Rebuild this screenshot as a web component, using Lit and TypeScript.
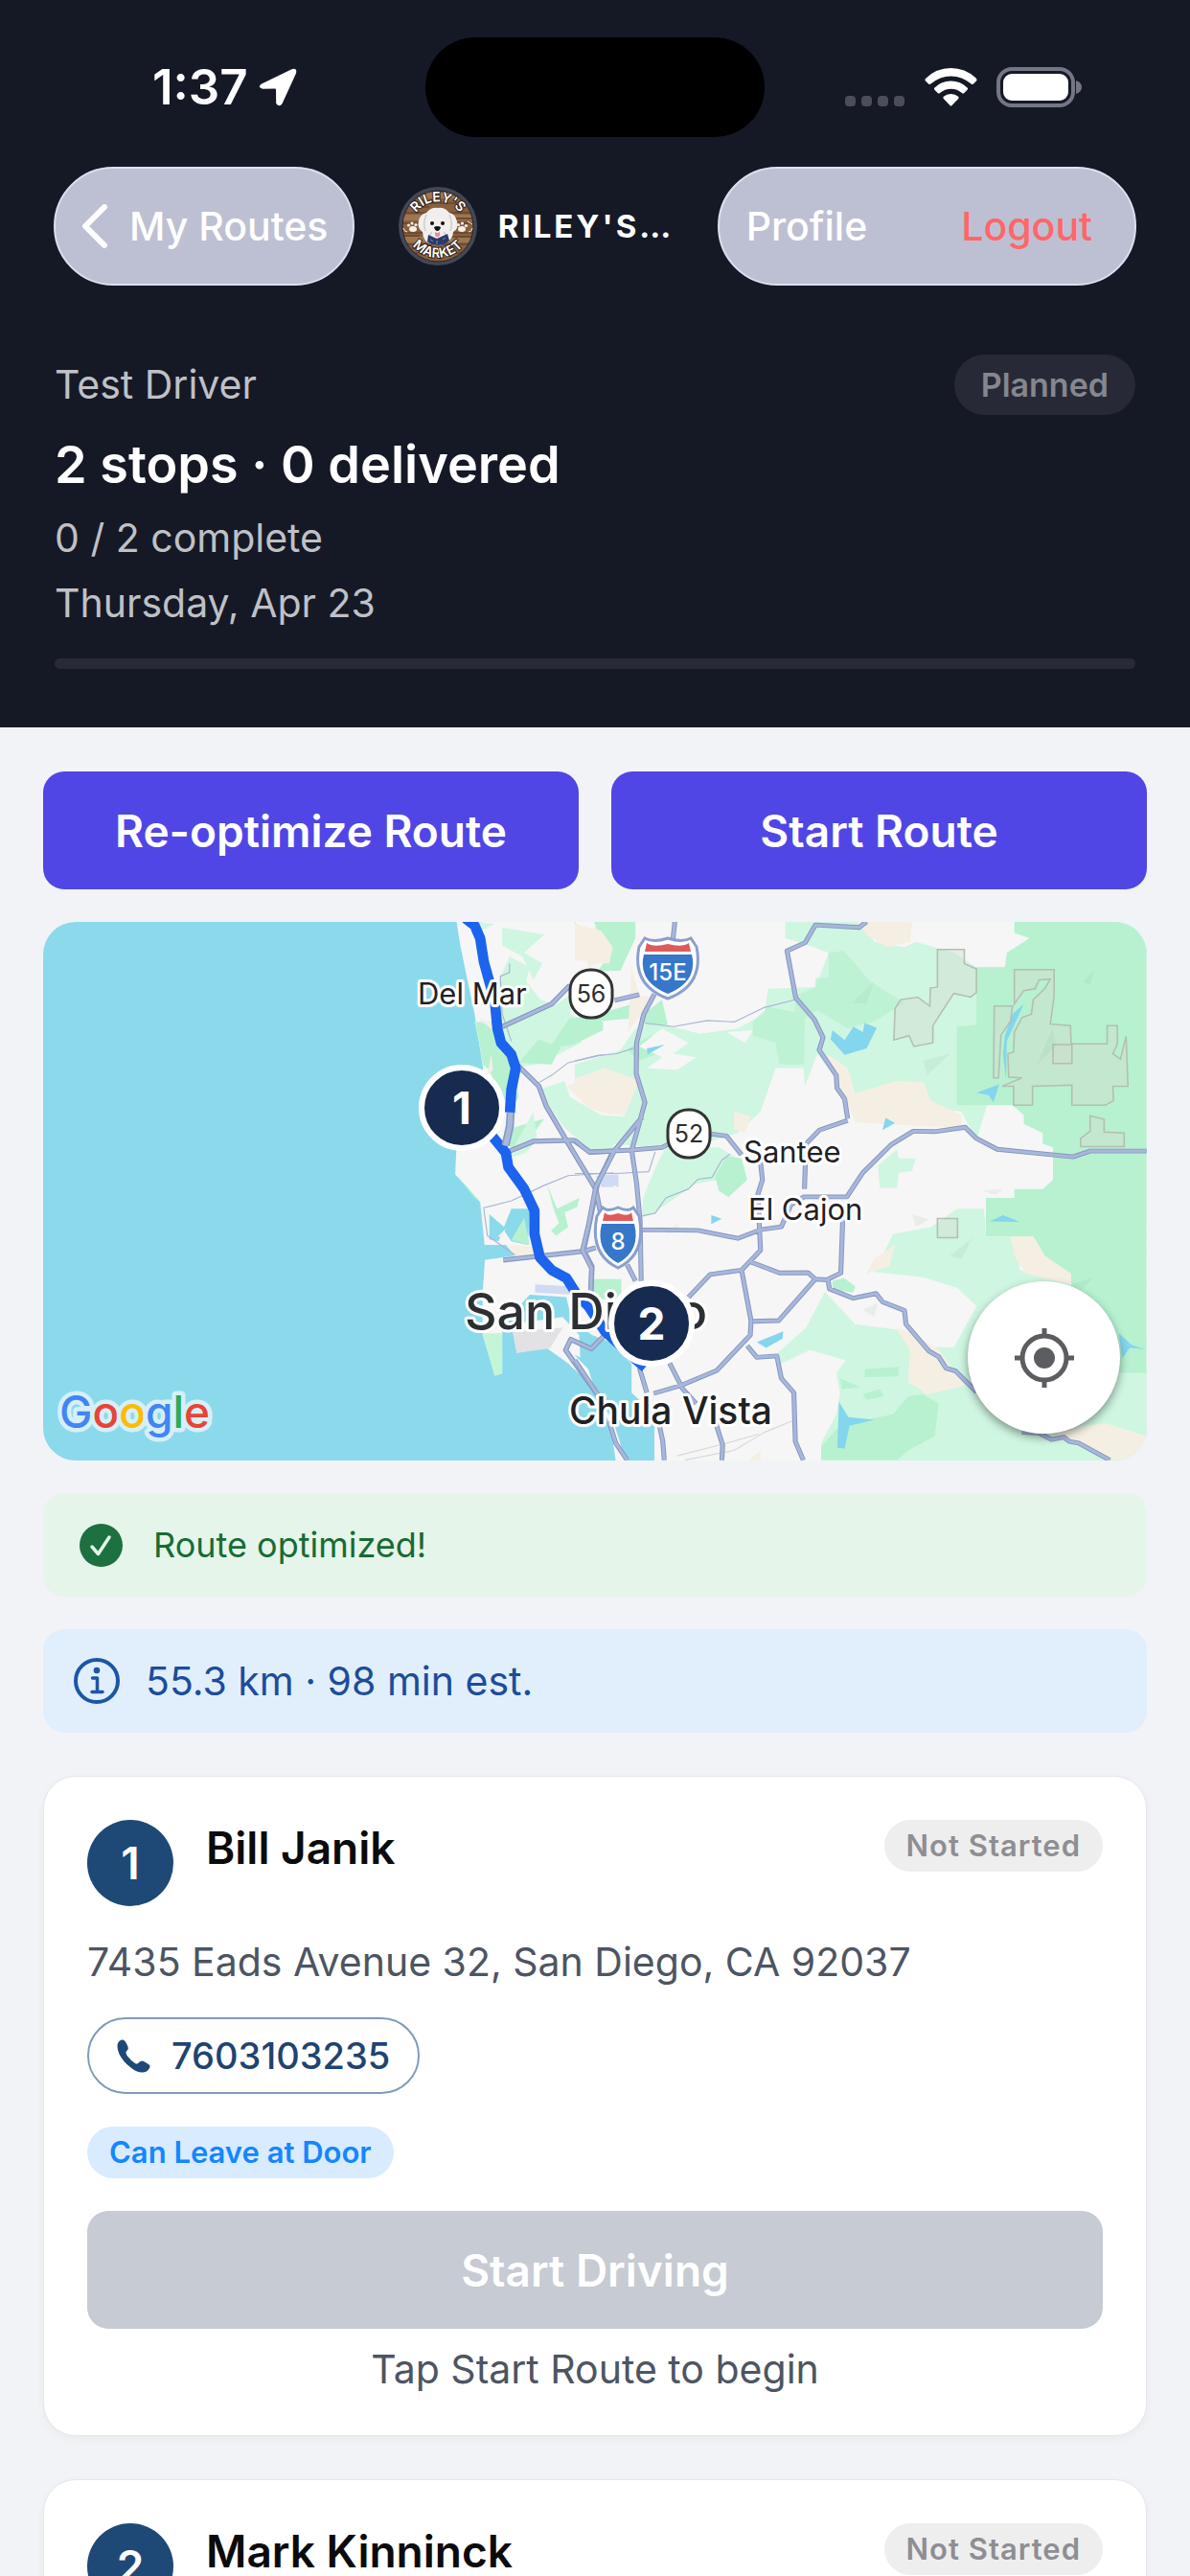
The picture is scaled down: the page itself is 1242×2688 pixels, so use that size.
import { LitElement, html, css, svg, nothing } from "lit";
import { customElement, property } from "lit/decorators.js";

interface Stop {
  order: number;
  name: string;
  status: string;
  address?: string;
  phone?: string;
  tag?: string;
}

interface Pin {
  order: number;
  x: number;
  y: number;
}

const STOPS: Stop[] = [
  {
    order: 1,
    name: "Bill Janik",
    status: "Not Started",
    address: "7435 Eads Avenue 32, San Diego, CA 92037",
    phone: "7603103235",
    tag: "Can Leave at Door",
  },
  { order: 2, name: "Mark Kinninck", status: "Not Started" },
];

/* Pin centres in map units (the map canvas is 1152 x 562). */
const PINS: Pin[] = [
  { order: 1, x: 437, y: 194 },
  { order: 2, x: 635, y: 419 },
];

const SANS = css`Inter, "Liberation Sans", sans-serif`;

/* ---------- Status bar ---------- */
@customElement("status-bar")
class StatusBar extends LitElement {
  static styles = css`
    :host {
      display: grid;
      grid-template-columns: 1fr auto 1fr;
      padding-top: 39px;
      height: 104px;
      font-family: ${SANS};
      color: #fff;
    }
    .left {
      display: flex;
      align-items: center;
      gap: 11px;
      padding-left: 159px;
    }
    .time {
      font-size: 51px;
      font-weight: 600;
      line-height: 60px;
    }
    .island {
      width: 354px;
      height: 104px;
      border-radius: 52px;
      background: #000;
    }
    .right {
      display: flex;
      align-items: center;
      justify-content: flex-end;
      padding-right: 112px;
    }
    .dots {
      margin-right: 21px;
    }
    .wifi {
      margin-right: 20px;
    }
    svg {
      display: block;
    }
  `;

  render() {
    return html`
      <div class="left">
        <span class="time">1:37</span>
        <svg width="40" height="40" viewBox="0 0 40 40" aria-hidden="true">
          <path
            d="M3 16.5 34.5 1.2 Q40.4 -0.400 39 5.6 L24.6 37 Q21.6 41.600 18.2 37 L18 22.6 Q18 21.6 17 21.6 L4 21.8 Q-2 20 3 16.5Z"
            fill="#fff"
          />
        </svg>
      </div>
      <div class="island"></div>
      <div class="right">
        <svg class="dots" width="62" height="40" viewBox="0 0 62 40" aria-hidden="true">
          ${[0, 17, 34, 51].map(
            (x) => svg`<rect x=${x} y="29" width="11" height="11" rx="4" fill="#4b4d5a" />`,
          )}
        </svg>
        <svg class="wifi" width="55" height="40" viewBox="0 0 55 40" aria-hidden="true">
          <g fill="#fff">
            <path d="M27.500 0 Q43 0 54 11 Q55 12.500 54 13.600 L51 16.600 Q50 17.600 48.600 16.600 Q39 8.500 27.500 8.500 Q16 8.500 6.400 16.600 Q5 17.600 4 16.600 L1 13.600 Q0 12.500 1 11 Q12 0 27.500 0Z" />
            <path d="M27.500 13.500 Q37.500 13.500 44.600 20.500 Q45.600 21.600 44.600 22.800 L41.300 26 Q40.200 27 39 26 Q34 21.700 27.500 21.700 Q21 21.700 16 26 Q14.800 27 13.700 26 L10.400 22.800 Q9.400 21.600 10.400 20.500 Q17.500 13.500 27.500 13.500Z" />
            <path d="M27.500 27 Q32 27 35.200 29.800 Q36.200 30.800 35.200 32 L28.500 39 Q27.500 40 26.500 39 L19.800 32 Q18.800 30.800 19.800 29.800 Q23 27 27.500 27Z" />
          </g>
        </svg>
        <svg width="90" height="42" viewBox="0 0 90 42" aria-hidden="true">
          <rect x="2" y="2" width="78" height="38" rx="14" fill="none" stroke="#757683" stroke-width="4" />
          <rect x="7" y="7" width="68" height="28" rx="9" fill="#fff" />
          <path d="M83 14 Q89 16 89 21 Q89 26 83 28Z" fill="#757683" />
        </svg>
      </div>
    `;
  }
}

/* ---------- Round shop logo ---------- */
@customElement("shop-logo")
class ShopLogo extends LitElement {
  static styles = css`
    :host {
      display: block;
      width: 82px;
      height: 82px;
      flex: none;
    }
    svg {
      display: block;
    }
    .arc {
      font: 600 14px ${SANS};
      fill: #fff;
      stroke: #2e1f18;
      stroke-width: 2px;
      paint-order: stroke;
    }
  `;

  render() {
    return html`
      <svg width="82" height="82" viewBox="0 0 82 82" role="img" aria-label="Riley's Market">
        <defs>
          <clipPath id="disc"><circle cx="41" cy="41" r="37" /></clipPath>
          <path id="top" d="M15 33 A28 28 0 0 1 67 33" />
          <path id="bottom" d="M8 48 A34 34 0 0 0 74 48" />
        </defs>
        <circle cx="41" cy="41" r="41" fill="#434856" />
        <g clip-path="url(#disc)">
          <rect width="82" height="82" fill="#87603f" />
          <path d="M0 9h82M0 32h82M0 55h82" stroke="#9c7552" stroke-width="6" />
          <path d="M0 17h82M0 27h82M0 38h82M0 48h82M0 60h82M0 69h82" stroke="#563824" stroke-width="1" />
          <path d="M12 21h20M50 33h28M4 51h18M55 52h22M14 64h16" stroke="#70492f" stroke-width="2" />
        </g>
        <circle cx="41" cy="41" r="37" fill="none" stroke="#31231f" stroke-width="1" />
        <path
          d="M41 22 Q48 21 53 27 Q59 28 61 36 Q63 44 57 47 Q57 52 53 56 Q48 61 41 61 Q33 61 28 56 Q25 52 25 47 Q19 43 21 35 Q23 28 29 27 Q34 21 41 22Z"
          fill="#f0efed"
        />
        <path d="M29 29 Q25 38 28 46 M53 29 Q57 38 54 46 M35 47 Q31 51 34 56 M47 47 Q51 51 48 56" fill="none" stroke="#d0ccca" stroke-width="1.500" />
        <path d="M31 50 L40 54 L51 49 L53 56 Q49 61 41 61 Q34 61 30 57Z" fill="#293a69" />
        <path d="M33 55l3 2M46 55l3-2M40 56v4" stroke="#7c89b5" stroke-width="1" />
        <circle cx="35" cy="38" r="2" fill="#111" />
        <circle cx="46" cy="38" r="2" fill="#111" />
        <path d="M37 42 Q40.500 40 44 42 Q43 46 40.500 46 Q38 46 37 42Z" fill="#111" />
        <path d="M38 47 Q40.500 49 43 47 Q44 52 40.500 52.500 Q37.500 52 38 47Z" fill="#ee8791" />
        <g fill="#f5efe8">
          <ellipse cx="15" cy="44" rx="4" ry="3" />
          <circle cx="10.500" cy="40" r="1.600" /><circle cx="14" cy="38" r="1.600" /><circle cx="18" cy="39.500" r="1.600" />
          <ellipse cx="66" cy="44" rx="4" ry="3" />
          <circle cx="62.500" cy="39.500" r="1.600" /><circle cx="66.500" cy="38" r="1.600" /><circle cx="70.500" cy="40.500" r="1.600" />
        </g>
        <path d="M5 43 Q6 47 9 47M77 43 Q76 47 73 47M72 36l5 3" fill="none" stroke="#f5efe8" stroke-width="1" />
        <text class="arc" text-anchor="middle"><textPath href="#top" startOffset="50%">RILEY'S</textPath></text>
        <text class="arc" text-anchor="middle"><textPath href="#bottom" startOffset="50%">MARKET</textPath></text>
      </svg>
    `;
  }
}

/* ---------- Route map ---------- */
@customElement("route-map")
class RouteMap extends LitElement {
  static styles = css`
    :host {
      display: block;
      position: relative;
      flex: none;
      border-radius: 34px;
      overflow: hidden;
      font-family: ${SANS};
    }
    .canvas {
      display: block;
      width: 100%;
      aspect-ratio: 1152 / 562;
    }
    .road {
      fill: none;
      stroke-linejoin: round;
    }
    .city {
      fill: #1f2124;
      stroke: #fff;
      stroke-width: 6px;
      stroke-linejoin: round;
      paint-order: stroke;
      font-size: 31px;
    }
    .mid {
      font-size: 39px;
      font-weight: 500;
    }
    .big {
      font-size: 52px;
      font-weight: 500;
      fill: #2d3033;
    }
    .shield {
      font-size: 25px;
      text-anchor: middle;
      fill: #2d2d2d;
    }
    .interstate {
      fill: #fff;
      font-weight: 500;
      font-size: 24px;
    }
    .google {
      font: 500 46px ${SANS};
      stroke: #d6eff8;
      stroke-width: 9px;
      stroke-linejoin: round;
      paint-order: stroke;
    }
    .pin {
      position: absolute;
      box-sizing: border-box;
      width: 90px;
      height: 90px;
      margin: -45px 0 0 -45px;
      display: flex;
      align-items: center;
      justify-content: center;
      border: 6px solid #fff;
      border-radius: 50%;
      background: #172b50;
      color: #fff;
      font-size: 46px;
      font-weight: 700;
      line-height: 50px;
    }
    .locate {
      position: absolute;
      right: 28px;
      bottom: 28px;
      width: 159px;
      height: 159px;
      padding: 0;
      display: flex;
      align-items: center;
      justify-content: center;
      border: 0;
      border-radius: 50%;
      background: #fff;
      box-shadow: 0 4px 10px rgba(0, 0, 0, 0.4);
    }
  `;

  private interstate(x: number, y: number, w: number, label: string) {
    const k = w / 2;
    return svg`<g transform="translate(${x} ${y})">
      <path d="M${-k + 6} -31 Q${-k / 2} -26 0 -31 Q${k / 2} -26 ${k - 6} -31 L${k} -22 Q${k + 8} 18 0 32 Q${-k - 8} 18 ${-k} -22Z" fill="#fff" stroke="#8a9fd0" stroke-width="3" />
      <path d="M${-k + 5} -14 H${k - 5} Q${k + 2} 14 0 27 Q${-k - 2} 14 ${-k + 5} -14Z" fill="#3677ca" />
      <path d="M${-k + 8} -26 Q${-k / 2} -21 0 -25 Q${k / 2} -21 ${k - 8} -26 L${k - 6} -17 H${-k + 6}Z" fill="#de5b5b" />
      <text class="shield interstate" y="13">${label}</text>
    </g>`;
  }

  private stateRoute(x: number, y: number, label: string) {
    return svg`<g transform="translate(${x} ${y})">
      <rect x="-22" y="-25" width="44" height="50" rx="21" fill="#fff" stroke="#333" stroke-width="3" />
      <text class="shield" y="9">${label}</text>
    </g>`;
  }

  render() {
    const highwaysWest =
      "M1265 325 L1400 262 1450 210 M1300 425 L1365 490 1385 545 1440 640 1520 775 1535 850 M1288 560 L1288 600 1274 640 1272 690 M1285 670 L1350 643 1460 640 1505 673 1568 670 M1568 670 L1525 760 1505 860 1487 945 1510 990 1507 1060 M1268 972 L1487 948 1520 938 M1545 1180 L1508 1218 1452 1192 1438 1222 1475 1275 1525 1345";
    const highwaysEast =
      "M264 34 L258 90 M105 252 L170 236 M210 235 L182 290 163 370 162 455 185 535 168 600 150 668 163 760 172 860 175 1030 M178 575 L105 668 55 770 35 880 20 945 44 995 42 1065 M0 640 L38 673 150 667 230 660 258 645 M358 622 L400 628 440 680 M490 700 L495 750 483 790 490 945 440 1000 465 1140 463 1180 375 1278 280 1320 208 1342 M770 34 L750 50 635 43 608 92 560 115 583 245 632 305 655 355 645 390 690 460 692 495 712 525 720 580 M720 585 L645 612 610 650 606 775 M178 888 L325 890 430 912 490 888 545 880 570 820 605 797 718 797 760 730 835 652 893 615 950 616 1030 604 1060 635 1115 665 1315 686 1360 670 1509 670 M707 860 L702 1008 665 1027 635 1025 615 1007 540 1008 465 978 M300 1075 L357 1012 440 1000 M632 1028 L538 1140 470 1142 M668 1027 L672 1052 735 1078 795 1065 812 1088 870 1112 874 1150 935 1225 960 1240 980 1272 1005 1280 1060 1338 M1180 1450 L1225 1452 1258 1470 1290 1463 1305 1475 1330 1480 1412 1527 M455 1210 L480 1242 533 1238 545 1300 578 1340 582 1475 603 1527 M250 1258 L285 1330 320 1370 M372 1425 L390 1485 388 1527 M170 1270 L190 1340 M222 1425 L232 1475 236 1527 M0 1250 L60 1345 M90 1420 L108 1480 138 1527 M138 985 L160 1030";
    return html`
      <svg class="canvas" viewBox="0 0 1152 562" role="img" aria-label="Route map of San Diego">
        <rect width="1152" height="562" fill="#8bdaec" />
        <!-- Western half: coastline, parks and bays -->
        <g transform="matrix(.3827 0 0 .3763 -5 -13)">
          <path d="M1140 30 L1150 95 1165 170 1190 290 1213 440 1190 580 1140 665 1137 735 1205 812 1217 930 1275 930 1300 960 1218 972 1212 1060 1212 1180 1245 1293 1265 1287 1265 1165 1320 1090 1340 1068 1440 1075 1455 1140 1510 1180 1560 1200 1618 1260 1618 1340 1680 1400 1680 1530 3030 1530 3030 30Z" fill="#f6f6f6" />
          <path d="M1290 1150 L1430 1130 1475 1180 1478 1242 1462 1235 1500 1275 1520 1340 1568 1420 1590 1490 1605 1530 1575 1530 1560 1430 1500 1310 1440 1255 1385 1215 1305 1230Z" fill="#f6f6f6" />
          <path d="M1295 1170 L1430 1160 1395 1217 1305 1230Z" fill="#e2e2e4" />
          <path d="M1212 1175 H1265 V1287 L1245 1293Z" fill="#c4f5d6" />
          <path d="M1190 34 L1245 40 1205 60 1190 55Z M1265 50 L1380 70 1325 120 1375 150 1350 195 1320 130 1265 100Z M1255 200 L1285 130 1340 160 1330 200 1370 250 1410 265 1460 230 1450 290 1490 310 1480 370 1430 395 1360 430 1240 445 1215 435 1190 310 1240 310Z" fill="#cff6e1" />
          <path d="M1193 312 L1240 320 1260 395 1300 430 1310 520 1290 560 1225 440 1213 430Z M1310 425 L1365 360 1400 375 1450 300 1540 310 1540 335 1460 375 1425 380 1400 430Z M1458 34 L1568 100 V150 L1500 90Z M1280 610 L1380 580 1330 650 1290 680Z" fill="#b7f1d0" />
          <path d="M1365 500 L1435 475 1450 520 1568 590 1568 665 1500 665 1430 600Z M1350 560 L1280 690 1330 675 1360 640Z" fill="#cff6e1" />
          <path d="M1478 90 L1520 45 1568 34 V130 L1500 160Z M1440 490 L1568 440 V570 L1500 550Z M1280 930 L1345 935 1355 955 1300 960Z M1235 400 L1240 445 1225 460Z M1200 300 L1270 330 1250 345Z" fill="#f5efe3" />
          <path d="M1355 1040 L1450 1045 1460 1068 1355 1062Z M1520 740 H1568 V770 H1535Z" fill="#d1daf4" />
          <path d="M1230 845 L1270 880 1290 830 1340 830 1335 930 1290 920 1270 890 1255 920 1230 915Z" fill="#8bdaec" />
          <path d="M1325 855 L1340 930 1290 917Z M1388 765 L1415 830 1475 800 1470 825 1435 840 1445 880 1412 905 1398 890 1420 870 1405 830Z M1515 1025 H1590 V1080 H1515Z M1140 735 L1205 810 1190 800Z" fill="#b7f1d0" />
          <path d="M1255 905 L1275 885 1262 915Z" fill="#f5efe3" />
          <path class="road" d="M1285 150 V175 L1260 185 1265 290 1290 365 M1365 480 L1400 460 1445 425 1530 405 1568 402 M1213 828 L1290 808 1380 765 1445 738 1568 730 M1215 830 L1225 905 1300 958" stroke="#a9b5d2" stroke-width="3" />
        </g>
        <!-- Eastern half: hills, parks and lakes -->
        <g transform="matrix(.3954 0 0 .3763 555 -13)">
          <path d="M555 34 H760 L790 90 870 105 900 90 1000 120 1060 160 1135 160 1100 500 1060 640 1020 560 870 545 740 540 640 400 607 490 603 440 530 440 490 560 430 620 300 660 200 660 100 650 0 620 0 540 60 570 130 575 165 480 80 440 0 470 0 430 120 390 160 330 200 310 330 345 430 330 500 290 510 220 635 215 670 120 620 100 555 80Z" fill="#cff6e1" />
          <path d="M50 34 L160 34 160 80 120 170 60 170 90 130Z M0 300 L60 290 160 260 170 300 60 310 0 360Z M170 300 L230 250 245 320 190 320Z M140 385 L200 350 260 350 220 400 165 420Z" fill="#b7f1d0" />
          <path d="M170 380 L230 330 300 370 260 400 320 410 270 445 190 440 230 410Z M400 340 L470 335 450 370Z" fill="#f6f6f6" />
          <path d="M670 120 L710 115 780 200 870 260 790 310 720 330 640 280 607 300 605 430 540 430 530 370 470 350 470 310 510 270 580 285 583 240 635 215 635 190 670 190Z" fill="#b7f1d0" opacity=".7" />
          <path d="M0 40 L70 60 100 105 90 150 0 140Z M0 470 L80 440 170 475 130 575 60 550 0 510Z M150 160 L170 240 210 240 140 340Z M745 34 H890 L885 90 825 105 770 70Z M665 400 L720 440 740 510 850 475 920 480 940 530 1020 570 1020 605 900 600 740 590 720 540 690 490Z M420 560 L465 575 450 620 420 610Z" fill="#f5efe3" />
          <path d="M1160 34 H1509 V1290 H1420 L1300 1200 1310 1030 1240 960 1210 907 H1085 V800 H1160 V775 H1235 L1262 750 V660 L1235 650 V620 L1185 595 V570 L1155 543 H1008 V325 L1060 320 V160 H1135 L1140 120 1200 80 1160 65Z" fill="#b7f1d0" />
          <path d="M240 660 L380 660 430 690 380 750 320 760 210 840 178 850 180 800 215 710Z M800 710 L850 665 855 690 900 690 890 725 855 730 850 772 805 772Z" fill="#cff6e1" />
          <path d="M370 740 L400 685 440 690 455 750 405 798 380 780Z M48 1025 H110 L105 1080 48 1080Z M680 1030 L710 1022 740 1045 735 1062 680 1055Z" fill="#b7f1d0" />
          <path d="M1080 830 L1085 907 H1160 L1175 1000 1310 1040 1300 1200 1400 1285 H1509 V1530 H655 L650 1480 690 1400 700 1340 690 1285 715 1250 620 1222 540 1262 530 1235 610 1160 660 1060 740 1150 850 1165 880 1210 1000 1215 1060 1100 1010 1050 920 1020 790 1005 840 900 940 880 1010 830Z" fill="#cff6e1" />
          <path d="M650 1527 L650 1490 700 1430 840 1400 880 1350 920 1345 960 1370 950 1460 880 1500 850 1527Z M765 1275 L855 1268 853 1295 765 1297Z M700 1300 L755 1325 705 1330Z M760 1345 L805 1330 815 1350 770 1360Z" fill="#b7f1d0" />
          <path d="M1150 907 H1210 L1240 960 1310 1010 1310 1040 1190 1010 1160 960Z M845 1160 L880 1170 960 1220 1030 1320 930 1345 880 1310 885 1220Z M1290 1440 L1400 1425 1509 1460 V1490 L1480 1527 H1420 L1270 1460Z M790 970 L845 930 830 990 770 1010Z M240 900 L280 890 270 870Z M490 1500 L460 1527 H490Z" fill="#f5efe3" />
          <path d="M73 735 H115 V770 L73 755Z" fill="#d1daf4" />
          <path d="M680 335 L712 362 735 325 760 340 765 315 797 328 770 385 712 403 675 360Z M190 385 L238 375 192 402Z M820 578 L845 592 812 612Z M1060 508 L1120 485 1105 535 1092 515Z M1185 262 L1160 320 1140 365 1138 470 1130 400 1135 350 1155 290Z M1095 865 L1130 848 1175 866Z M360 848 L388 858 360 872Z M480 1200 L550 1170 548 1190 505 1216Z M697 1365 L722 1408 790 1415 725 1432 712 1495 693 1493Z M1436 1175 L1470 1208 1505 1220 1465 1215 1445 1245Z" fill="#84d5ee" />
          <g fill="#d5dacd" fill-opacity=".4" stroke="#b3bfb1" stroke-width="4">
            <path d="M957 111 H1028 V150 L1060 165 V230 L1045 243 1000 233 945 322 V370 L895 380 882 350 842 362 845 275 860 250 905 243 937 268 938 218 957 215Z" />
            <path d="M1160 167 H1265 V240 L1255 318 1308 322 1310 373 H1405 V322 H1432 V373 L1420 400 1440 415 1455 352 1460 490 H1420 L1422 530 1400 543 H1312 V487 L1208 490 V543 H1158 V490 H1128 L1180 467 1145 465 1143 400 1158 395 1160 340 1180 300 1205 290 1210 250 1240 220 1255 193 1225 195 1215 220 1185 225 1160 262Z" />
            <path d="M1107 268 H1155 L1150 310 1125 348 1118 467 H1105Z M957 857 H1010 V910 H957Z M1262 375 H1312 V427 H1262Z M1360 572 L1397 582 V617 L1450 620 V658 H1335 V635 L1360 615Z" />
          </g>
          <path d="M730 260 L790 200 770 260Z M920 420 L990 400 930 460Z M1220 430 L1260 330 1270 380Z M1340 200 L1370 170 1360 210Z M990 960 L1050 910 1020 970Z M760 1110 L800 1090 790 1130Z M1310 1040 L1370 1020 1330 1060Z M890 845 L935 860 900 880Z M1075 780 L1130 775 1110 792Z" fill="#8fbfa4" fill-opacity=".14" />
          <path class="road" d="M185 315 L260 325 350 308 420 312 500 272 583 250 M0 420 L60 405 110 400 155 385 M0 732 H110 L195 727 212 672 M178 850 L212 842 240 800 300 775 325 748 362 743 388 695 410 678" stroke="#a9b5d2" stroke-width="3" />
          <path class="road" d="M270 1515 L400 1480 485 1455 M290 1527 L420 1500 500 1450 575 1418" stroke="#d5d8de" stroke-width="3" />
        </g>
        <g transform="matrix(.3827 0 0 .3763 -5 -13)">
          <path class="road" d=${highwaysWest} stroke="#8497c0" stroke-width="14" />
          <path class="road" d=${highwaysWest} stroke="#a8b7da" stroke-width="8" />
        </g>
        <g transform="matrix(.3954 0 0 .3763 555 -13)">
          <path class="road" d=${highwaysEast} stroke="#8497c0" stroke-width="13" />
          <path class="road" d=${highwaysEast} stroke="#a8b7da" stroke-width="8" />
        </g>
        <!-- Planned route -->
        <g transform="matrix(.3827 0 0 .3763 -5 -13)">
          <path class="road" d="M1165 25 L1190 45 1205 80 1215 145 1245 255 1252 330 1262 370 1290 402 1302 440 1290 500 1286 563 M1235 625 L1275 675 1282 715 1325 775 1353 835 1353 900 1368 965 1400 1000 1440 1022 1470 1070 1500 1100 1545 1170 1620 1240 1655 1270" stroke="#1c63ee" stroke-width="28" />
          <path class="road" d="M1288 563 L1286 600 1274 655" stroke="#8497c0" stroke-width="22" />
          <path class="road" d="M1288 563 L1286 600 1274 655" stroke="#a8b7da" stroke-width="14" />
        </g>
        ${this.stateRoute(572, 75, "56")} ${this.stateRoute(674, 221, "52")}
        ${this.interstate(652, 48, 60, "15E")} ${this.interstate(600, 329, 44, "8")}
        <text class="city" x="391" y="86">Del Mar</text>
        <text class="city" x="731" y="251">Santee</text>
        <text class="city" x="736" y="311">El Cajon</text>
        <text class="city big" x="440" y="425">San Diego</text>
        <text class="city mid" x="549" y="524">Chula Vista</text>
        <text class="google" x="17" y="528"><tspan fill="#4285f4">G</tspan><tspan fill="#ea4335">o</tspan><tspan fill="#fbbc05">o</tspan><tspan fill="#4285f4">g</tspan><tspan fill="#34a853">l</tspan><tspan fill="#ea4335">e</tspan></text>
      </svg>
      ${PINS.map(
        (p) => html`<span class="pin" style="left:${(p.x / 1152) * 100}%;top:${(p.y / 562) * 100}%">${p.order}</span>`,
      )}
      <button class="locate" aria-label="Centre on my location">
        <svg width="62" height="62" viewBox="0 0 62 62" aria-hidden="true">
          <circle cx="31" cy="31" r="23" fill="none" stroke="#5c5d61" stroke-width="5" />
          <circle cx="31" cy="31" r="11" fill="#5c5d61" />
          <path d="M31 0V8M31 54V62M0 31H8M54 31H62" stroke="#5c5d61" stroke-width="5" />
        </svg>
      </button>
    `;
  }
}

/* ---------- Stop card ---------- */
@customElement("stop-card")
class StopCard extends LitElement {
  @property({ attribute: false }) stop!: Stop;

  static styles = css`
    :host {
      display: flex;
      flex-direction: column;
      align-items: flex-start;
      gap: 34px;
      flex: none;
      padding: 45px;
      border: 1px solid #e6e7ea;
      border-radius: 34px;
      background: #fff;
      box-shadow: 0 3px 10px rgba(20, 25, 40, 0.04);
      font-family: ${SANS};
    }
    .head {
      display: flex;
      align-items: flex-start;
      align-self: stretch;
      gap: 34px;
    }
    .number {
      flex: none;
      width: 90px;
      height: 90px;
      border-radius: 50%;
      background: #1e4976;
      color: #fff;
      font-size: 46px;
      font-weight: 600;
      line-height: 90px;
      text-align: center;
    }
    .name {
      flex: 1;
      margin: 0;
      color: #0b0b0c;
      font-size: 46px;
      font-weight: 600;
      line-height: 58px;
    }
    .badge {
      padding: 0 23px;
      border-radius: 27px;
      background: #eeeeee;
      color: #8e8e93;
      font-size: 31px;
      font-weight: 600;
      line-height: 54px;
      letter-spacing: 1px;
      white-space: nowrap;
    }
    .leave {
      background: #d9ebff;
      color: #1486ff;
      letter-spacing: 0;
    }
    .address,
    .hint {
      margin: 0;
      color: #4d5562;
      font-size: 41px;
      line-height: 48px;
    }
    .phone {
      box-sizing: border-box;
      height: 80px;
      display: flex;
      align-items: center;
      gap: 22px;
      padding: 0 29px;
      border: 2px solid #7f9bbb;
      border-radius: 40px;
      color: #1e4472;
      font-size: 38px;
      font-weight: 500;
      text-decoration: none;
    }
    .action {
      align-self: stretch;
      display: flex;
      flex-direction: column;
      gap: 18px;
      text-align: center;
    }
    .drive {
      height: 123px;
      border: 0;
      border-radius: 22px;
      background: #c6cbd4;
      color: #fff;
      font: 600 46px ${SANS};
    }
  `;

  render() {
    const s = this.stop;
    return html`
      <div class="head">
        <span class="number">${s.order}</span>
        <h2 class="name">${s.name}</h2>
        <span class="badge">${s.status}</span>
      </div>
      ${s.address
        ? html`
            <p class="address">${s.address}</p>
            <a class="phone" href="tel:${s.phone}">
              <svg width="35" height="35" viewBox="0 0 35 35" aria-hidden="true">
                <path
                  d="M1 4 Q3 0 6.500 0.500 Q8.500 1 10 4.500 Q12.500 8.500 11.500 10.500 L9.600 13 Q9 14.500 11 17.500 Q14.500 22 19 25 Q20.800 26 22 25 L24.500 23 Q26 22 29 23.500 L33 26 Q35.500 27.500 34 30 Q31.500 34.500 26.500 34.500 Q20.500 34.500 14.500 29.500 Q6.500 23.500 2.500 15.500 Q-0.500 9 1 4Z"
                  fill="#1e4976"
                />
              </svg>
              <span>${s.phone}</span>
            </a>
            <span class="badge leave">${s.tag}</span>
            <div class="action">
              <button class="drive" disabled>Start Driving</button>
              <p class="hint">Tap Start Route to begin</p>
            </div>
          `
        : nothing}
    `;
  }
}

/* ---------- Screen ---------- */
@customElement("app-root")
class AppRoot extends LitElement {
  static styles = css`
    :host {
      display: flex;
      flex-direction: column;
      height: 100vh;
      overflow: hidden;
      background: #f1f3f6;
      font-family: ${SANS};
    }
    header {
      flex: none;
      background: #151926;
      color: #fff;
    }
    nav {
      display: flex;
      align-items: center;
      justify-content: space-between;
      padding: 31px 56px 0;
    }
    .link {
      padding: 0;
      border: 0;
      background: none;
      color: #fff;
      font: 500 41px ${SANS};
    }
    .logout {
      color: #ff6668;
    }
    .pill {
      box-sizing: border-box;
      height: 124px;
      display: flex;
      align-items: center;
      border: 2px solid #dcdff0;
      border-radius: 62px;
      background: #bdc0d2;
    }
    .back {
      gap: 22px;
      padding: 0 26px 0 27px;
    }
    .account {
      gap: 98px;
      padding: 0 44px 0 28px;
    }
    .brand {
      display: flex;
      align-items: center;
      gap: 22px;
    }
    .title {
      margin: 0;
      font-size: 33px;
      font-weight: 700;
      line-height: 40px;
      letter-spacing: 3px;
    }
    .summary {
      display: flex;
      flex-direction: column;
      gap: 12px;
      padding: 67px 57px 61px;
    }
    .row {
      display: flex;
      align-items: center;
      justify-content: space-between;
      height: 72px;
    }
    .muted {
      margin: 0;
      color: #bfc1c5;
      font-size: 41px;
      line-height: 56px;
    }
    .planned {
      padding: 0 28px;
      border-radius: 32px;
      background: #272a36;
      color: #85878f;
      font-size: 34px;
      font-weight: 600;
      line-height: 63px;
    }
    .count {
      margin: 0;
      font-size: 54px;
      font-weight: 600;
      line-height: 72px;
    }
    .track {
      height: 11px;
      margin-top: 18px;
      border-radius: 6px;
      background: #282a36;
    }
    main {
      flex: 1;
      min-height: 0;
      display: flex;
      flex-direction: column;
      gap: 34px;
      padding: 46px 45px;
      overflow: hidden;
    }
    .actions {
      flex: none;
      display: grid;
      grid-template-columns: 1fr 1fr;
      gap: 34px;
    }
    .primary {
      height: 123px;
      border: 0;
      border-radius: 22px;
      background: #5046e5;
      color: #fff;
      font: 600 46px ${SANS};
    }
    .notice {
      flex: none;
      height: 108px;
      display: flex;
      align-items: center;
      border-radius: 22px;
    }
    .done {
      gap: 32px;
      padding-left: 38px;
      background: #e5f5ea;
      color: #176b34;
      font-size: 36px;
    }
    .info {
      gap: 27px;
      padding-left: 32px;
      background: #e1effd;
      color: #1d4c9b;
      font-size: 41px;
    }
    .stops {
      flex: none;
      display: flex;
      flex-direction: column;
      gap: 45px;
      padding-top: 11px;
    }
    svg {
      display: block;
      flex: none;
    }
  `;

  render() {
    return html`
      <header>
        <status-bar></status-bar>
        <nav>
          <button class="link pill back">
            <svg width="28" height="46" viewBox="0 0 28 46" aria-hidden="true">
              <path d="M24 3 L4 23 L24 43" fill="none" stroke="#fff" stroke-width="6" stroke-linecap="round" stroke-linejoin="round" />
            </svg>
            My Routes
          </button>
          <div class="brand">
            <shop-logo></shop-logo>
            <h1 class="title">RILEY'S…</h1>
          </div>
          <div class="pill account">
            <button class="link">Profile</button>
            <button class="link logout">Logout</button>
          </div>
        </nav>
        <section class="summary">
          <div class="row">
            <p class="muted">Test Driver</p>
            <span class="planned">Planned</span>
          </div>
          <p class="count">2 stops · 0 delivered</p>
          <p class="muted">0 / 2 complete</p>
          <p class="muted">Thursday, Apr 23</p>
          <div class="track" role="progressbar" aria-valuemin="0" aria-valuemax="2" aria-valuenow="0"></div>
        </section>
      </header>
      <main>
        <div class="actions">
          <button class="primary">Re-optimize Route</button>
          <button class="primary">Start Route</button>
        </div>
        <route-map></route-map>
        <div class="notice done">
          <svg width="45" height="45" viewBox="0 0 45 45" aria-hidden="true">
            <circle cx="22.500" cy="22.500" r="22.500" fill="#1d7040" />
            <path d="M13 24 L19.500 31.500 L31 14" fill="none" stroke="#e5f5ea" stroke-width="3.500" stroke-linecap="round" stroke-linejoin="round" />
          </svg>
          <span>Route optimized!</span>
        </div>
        <div class="notice info">
          <svg width="48" height="48" viewBox="0 0 48 48" aria-hidden="true">
            <circle cx="24" cy="24" r="22" fill="none" stroke="#1f55a5" stroke-width="4" />
            <circle cx="24" cy="13" r="3.300" fill="#1f55a5" />
            <path d="M19.500 21 H24.500 V35 M19 35.500 H30" fill="none" stroke="#1f55a5" stroke-width="3.500" stroke-linecap="round" stroke-linejoin="round" />
          </svg>
          <span>55.3 km · 98 min est.</span>
        </div>
        <div class="stops">${STOPS.map((s) => html`<stop-card .stop=${s}></stop-card>`)}</div>
      </main>
    `;
  }
}
